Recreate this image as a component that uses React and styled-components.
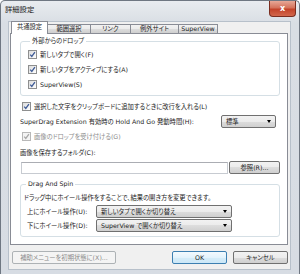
import styled, { createGlobalStyle } from 'styled-components';

const GlobalStyle = createGlobalStyle`
  html, body {
    margin: 0;
    padding: 0;
    background: #ffffff;
  }
  body {
    font-family: "DejaVu Sans", "Noto Sans CJK JP", sans-serif;
    font-size: 6.3px;
    font-feature-settings: "palt";
    color: #1c1c1c;
  }
`;

const Window = styled.div`
  width: 300px;
  height: 274px;
  box-sizing: border-box;
  border: 1px solid #6f7782;
  border-bottom: none;
  border-radius: 5px 5px 0 0;
  background: linear-gradient(#e9ecf0, #d9dee4 22px, #d7dce3);
  display: flex;
  flex-direction: column;
  padding: 0 8px 4px 7px;
`;

const TitleBar = styled.div`
  height: 20px;
  display: flex;
  align-items: flex-start;
  justify-content: space-between;
  margin-right: -5px;
`;

const Title = styled.span`
  font-family: "Noto Sans CJK JP", sans-serif;
  font-size: 7.3px;
  line-height: 10px;
  margin-top: 3px;
  margin-left: -3px;
`;

const CloseButton = styled.div`
  width: 27px;
  height: 16px;
  box-sizing: border-box;
  border: 1px solid #7a2d20;
  border-top: none;
  border-radius: 0 0 4px 4px;
  background: linear-gradient(#e7a897, #d4735c 45%, #c3432a 55%, #d2674c);
  display: flex;
  align-items: center;
  justify-content: center;
  color: #fff;
  font-family: "DejaVu Sans", sans-serif;
  font-weight: bold;
  font-size: 8px;
`;

const Client = styled.div`
  flex: 1;
  box-sizing: border-box;
  background: #f0f0f0;
  border: 1px solid #b7c0ca;
  display: flex;
  flex-direction: column;
`;

const TabStrip = styled.div`
  display: flex;
  align-items: flex-end;
  padding: 0 0 0 2px;
  height: 12px;
  margin-bottom: -1px;
  position: relative;
  z-index: 1;
`;

const Tab = styled.div`
  width: ${(p) => p.$w}px;
  height: ${(p) => (p.$active ? 13 : 10)}px;
  box-sizing: border-box;
  margin-left: -1px;
  border: 1px solid #898c95;
  border-bottom: ${(p) => (p.$active ? 'none' : '1px solid #898c95')};
  background: ${(p) =>
    p.$active ? '#ffffff' : 'linear-gradient(#f2f2f2, #ebebeb 50%, #dddddd 50%, #cfcfcf)'};
  display: flex;
  align-items: center;
  justify-content: center;
  line-height: 1;
  padding-bottom: ${(p) => (p.$active ? 1 : 0)}px;
  &:first-child {
    margin-left: 0;
  }
`;

const Panel = styled.div`
  flex: 1;
  margin: 0 2px 0 1px;
  background: #ffffff;
  border: 1px solid #898c95;
  padding: 2px 7px 0 9px;
`;

const Group = styled.fieldset`
  margin: 0;
  border: 1px solid #d5dfe5;
  border-radius: 3px;
  padding: ${(p) => p.$pad};
  min-width: 0;
`;

const Legend = styled.legend`
  padding: 0 2px;
  margin-left: 2px;
  line-height: 10px;
`;

const Row = styled.div`
  height: ${(p) => p.$h || 15}px;
  display: flex;
  align-items: center;
  padding-left: ${(p) => p.$indent || 0}px;
  justify-content: ${(p) => (p.$spread ? 'space-between' : 'flex-start')};
  color: ${(p) => (p.$disabled ? '#8d8d8d' : 'inherit')};
  white-space: nowrap;
`;

const Box = styled.span`
  width: 9px;
  height: 9px;
  box-sizing: border-box;
  border: 1px solid ${(p) => (p.$disabled ? '#b8b8b8' : '#8e8f8f')};
  background: ${(p) =>
    p.$disabled ? '#f4f4f4' : 'linear-gradient(135deg, #dcdcdc, #ffffff)'};
  margin-right: 3px;
  display: flex;
  flex-shrink: 0;
`;

const Check = ({ disabled }) => (
  <Box $disabled={disabled}>
    <svg width="7" height="7" viewBox="0 0 7 7">
      <path
        d="M1.2 3.6 L2.8 5.4 L5.9 1.2"
        fill="none"
        stroke={disabled ? '#a8a8a8' : '#3f5c97'}
        strokeWidth="1.3"
      />
    </svg>
  </Box>
);

const Select = styled.div`
  width: ${(p) => p.$w}px;
  height: 13px;
  box-sizing: border-box;
  border: 1px solid #707070;
  border-radius: 2px;
  background: linear-gradient(#f2f2f2, #ebebeb 50%, #dddddd 50%, #cfcfcf);
  display: flex;
  align-items: center;
  justify-content: space-between;
  padding: 0 4px 0 4px;
  margin-right: ${(p) => p.$mr || 0}px;
`;

const Arrow = styled.span`
  width: 0;
  height: 0;
  border-left: 2.5px solid transparent;
  border-right: 2.5px solid transparent;
  border-top: 3px solid #000;
`;

const FieldRow = styled.div`
  display: flex;
  align-items: center;
  height: 15px;
  padding-left: 1px;
  gap: 1px;
`;

const TextInput = styled.div`
  flex: 1;
  height: 12px;
  box-sizing: border-box;
  background: #fff;
  border: 1px solid #c7cbd1;
  border-top-color: #abadb3;
`;

const Button = styled.div`
  width: ${(p) => p.$w}px;
  height: 13px;
  box-sizing: border-box;
  border: 1px solid ${(p) => (p.$primary ? '#3c7fb1' : p.$disabled ? '#adb2b5' : '#707070')};
  border-radius: 2px;
  background: ${(p) =>
    p.$primary
      ? 'linear-gradient(#f3fafe, #e3f3fc 50%, #d6edf9 50%, #cbe7f7)'
      : p.$disabled
      ? '#f4f4f4'
      : 'linear-gradient(#f2f2f2, #ebebeb 50%, #dddddd 50%, #cfcfcf)'};
  color: ${(p) => (p.$disabled ? '#8b8b8b' : 'inherit')};
  display: flex;
  align-items: center;
  justify-content: center;
  white-space: nowrap;
  margin-left: ${(p) => p.$ml || 0}px;
`;

const Footer = styled.div`
  height: 24px;
  display: flex;
  align-items: center;
  padding: 0 2px 0 3px;
`;

const Spacer = styled.div`
  flex: 1;
`;

const tabs = [
  { label: '共通設定', w: 37, active: true },
  { label: '範囲選択', w: 44 },
  { label: 'リンク', w: 41 },
  { label: '例外サイト', w: 49 },
  { label: 'SuperView', w: 40 },
];

const App = () => {
  return (
    <>
      <GlobalStyle />
      <Window>
        <TitleBar>
          <Title>詳細設定</Title>
          <CloseButton>x</CloseButton>
        </TitleBar>
        <Client>
          <TabStrip>
            {tabs.map((t) => (
              <Tab key={t.label} $w={t.w} $active={t.active}>
                {t.label}
              </Tab>
            ))}
          </TabStrip>
          <Panel>
            <Group $pad="1px 0 3px 7px">
              <Legend>外部からのドロップ</Legend>
              <Row>
                <Check />
                新しいタブで開く(F)
              </Row>
              <Row>
                <Check />
                新しいタブをアクティブにする(A)
              </Row>
              <Row>
                <Check />
                SuperView(S)
              </Row>
            </Group>
            <Row $indent={2} style={{ marginTop: 3 }}>
              <Check />
              選択した文字をクリップボードに追加するときに改行を入れる(L)
            </Row>
            <Row $spread>
              SuperDrag Extension 有効時の Hold And Go 発動時間(H):
              <Select $w={55} $mr={4}>
                標準
                <Arrow />
              </Select>
            </Row>
            <Row $indent={2} $disabled>
              <Check disabled />
              画像のドロップを受け付ける(G)
            </Row>
            <Row $h={16}>画像を保存するフォルダ(C):</Row>
            <FieldRow>
              <TextInput />
              <Button $w={51}>参照(R)...</Button>
            </FieldRow>
            <Group $pad="1px 0 4px 3px" style={{ marginTop: 4 }}>
              <Legend>Drag And Spin</Legend>
              <Row $h={14}>ドラッグ中にホイール操作をすることで、結果の開き方を変更できます。</Row>
              <Row $indent={3} $h={14}>
                上にホイール操作(U):
                <Spacer />
                <Select $w={136} $mr={47}>
                  新しいタブで開くか切り替え
                  <Arrow />
                </Select>
              </Row>
              <Row $indent={3} $h={14}>
                下にホイール操作(D):
                <Spacer />
                <Select $w={136} $mr={47}>
                  SuperView で開くか切り替え
                  <Arrow />
                </Select>
              </Row>
            </Group>
          </Panel>
          <Footer>
            <Button $w={104} $disabled>
              補助メニューを初期状態に(X)...
            </Button>
            <Spacer />
            <Button $w={55} $primary>
              OK
            </Button>
            <Button $w={55} $ml={6}>
              キャンセル
            </Button>
          </Footer>
        </Client>
      </Window>
    </>
  );
};

export default App;
